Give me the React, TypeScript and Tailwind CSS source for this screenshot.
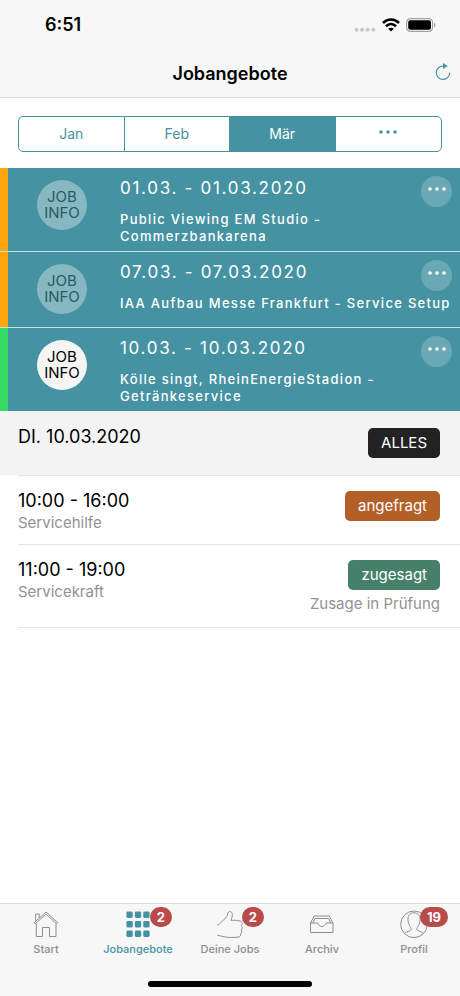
import React from "react";
import clsx from "clsx";

const months = ["Jan", "Feb", "Mär"];

const jobs = [
  { date: "01.03. - 01.03.2020", title: "Public Viewing EM Studio - Commerzbankarena", bar: "bg-[#ffa60d]", active: false },
  { date: "07.03. - 07.03.2020", title: "IAA Aufbau Messe Frankfurt - Service Setup", bar: "bg-[#ffa60d]", active: false },
  { date: "10.03. - 10.03.2020", title: "Kölle singt, RheinEnergieStadion - Getränkeservice", bar: "bg-[#33db64]", active: true },
];

const shifts = [
  { time: "10:00 - 16:00", role: "Servicehilfe", status: "angefragt", color: "bg-[#b26027]", note: "" },
  { time: "11:00 - 19:00", role: "Servicekraft", status: "zugesagt", color: "bg-[#46806a]", note: "Zusage in Prüfung" },
];

function Dots() {
  return (
    <svg viewBox="0 0 20 4" fill="currentColor" className="w-5" aria-hidden="true">
      <circle cx="3" cy="2" r="1.8" />
      <circle cx="10" cy="2" r="1.8" />
      <circle cx="17" cy="2" r="1.8" />
    </svg>
  );
}

function HomeIcon() {
  return (
    <svg width="28" height="28" viewBox="0 0 28 28" fill="none" stroke="currentColor" strokeWidth="1">
      <path d="M2.2 12.6 L14 2 L25.8 12.6 L24.8 13.8 L14 4.2 L3.2 13.8 Z" />
      <path d="M3.7 11 V4 H7.2 V8" />
      <path d="M4.3 13.500 V26.500 H10.500 V17.500 H17.500 V26.500 H24 V13.500" />
    </svg>
  );
}

function GridIcon() {
  return (
    <svg width="28" height="28" viewBox="0 0 28 28" fill="currentColor">
      {[1.6, 11, 20.6].map((y) =>
        [2.4, 10.8, 19.2].map((x) => <rect key={`${x}-${y}`} x={x} y={y} width="6.4" height="6.4" rx="1.4" />)
      )}
    </svg>
  );
}

function ThumbIcon() {
  return (
    <svg width="28" height="28" viewBox="0 0 28 28" fill="none" stroke="currentColor" strokeWidth="1" strokeLinejoin="round" strokeLinecap="round">
      <path d="M1.7 15 C5 14 7 9.500 10 7.700 C12.300 6 11 1.700 13.500 1.500 C17.500 1.500 16.500 6.500 15 10.300 C18 10.300 21 10.200 24 11 C26.500 11.700 26.800 14.500 25.300 15.500 C26.800 17 26.500 19 25.300 19.800 C26.300 21.500 25.500 23 24.600 23.800 C25 25.500 24 27 22 27.200 C17 27.600 13 27.500 10.700 27.200 C7 26.700 4.500 25.800 1.700 25.400" />
    </svg>
  );
}

function ArchiveIcon() {
  return (
    <svg width="28" height="28" viewBox="0 0 28 28" fill="none" stroke="currentColor" strokeWidth="1" strokeLinejoin="round">
      <path d="M2.500 13 V22.500 H25 V13 L21.300 6 H6.200 Z" />
      <path d="M2.500 13 H9.500 C10 15 12 16.500 13.800 16.500 C15.700 16.500 17.500 15 18 13 H25" />
      <path d="M5 12.800 L6.800 8.500 H20.700 L22.500 12.800" />
    </svg>
  );
}

function ProfileIcon() {
  return (
    <svg width="28" height="28" viewBox="0 0 28 28" fill="none" stroke="currentColor" strokeWidth="1">
      <circle cx="14" cy="14.300" r="13.300" />
      <path d="M4.500 23.500 C6 21.300 10.800 21.500 11.300 19.300 C11.300 17 8 15.500 8 9.300 C8 5 10.500 2.800 14 2.800 C17.500 2.800 20 5 20 9.300 C20 15.500 16.700 17 16.700 19.300 C17.200 21.500 22 21.300 23.500 23.500" />
    </svg>
  );
}

const tabs = [
  { label: "Start", icon: HomeIcon, badge: "" },
  { label: "Jobangebote", icon: GridIcon, badge: "2" },
  { label: "Deine Jobs", icon: ThumbIcon, badge: "2" },
  { label: "Archiv", icon: ArchiveIcon, badge: "" },
  { label: "Profil", icon: ProfileIcon, badge: "19" },
];

function StatusBar() {
  return (
    <div className="flex h-[50px] items-center justify-between pr-6 pl-[45px]">
      <span className="text-lg font-semibold">6:51</span>
      <div className="flex items-center gap-1.5">
        <svg width="22" height="16" viewBox="0 0 22 16" fill="#c9c9c9">
          <circle cx="2.500" cy="12.700" r="2" />
          <circle cx="8.100" cy="12.700" r="2" />
          <circle cx="13.700" cy="12.700" r="2" />
          <circle cx="19.300" cy="12.700" r="2" />
        </svg>
        <svg width="18" height="14" viewBox="0 0 18 14" fill="none" stroke="#000" strokeWidth="2.600">
          <path d="M1 5 C5.500 0.300 12.500 0.300 17 5" />
          <path d="M4 8.300 C7 5.400 11 5.400 14 8.300" />
          <path d="M9 13.500 L6.200 10.700 C7.800 9.300 10.200 9.300 11.800 10.700 Z" fill="#000" stroke="none" />
        </svg>
        <svg width="30" height="14" viewBox="0 0 30 14">
          <rect x="0.600" y="0.600" width="26" height="12.800" rx="4" fill="none" stroke="#a3a3a3" strokeWidth="1.200" />
          <rect x="2.200" y="2.200" width="22.800" height="9.600" rx="2.200" />
          <path d="M28 4.700 C29.800 5.400 29.800 8.600 28 9.300 Z" fill="#a3a3a3" />
        </svg>
      </div>
    </div>
  );
}

export default function App() {
  return (
    <div className="flex min-h-screen flex-col bg-white font-[Inter,sans-serif] text-black">
      <header className="border-b border-[#dcdcdc] bg-[#f7f7f7]">
        <StatusBar />
        <div className="grid h-[47px] grid-cols-[1fr_auto_1fr] items-center">
          <h1 className="col-start-2 text-lg font-semibold">Jobangebote</h1>
          <button type="button" aria-label="Aktualisieren" className="mr-2 justify-self-end pb-1 text-[#46979f]">
            <svg width="18" height="18" viewBox="0 0 18 18" fill="none" stroke="currentColor" strokeWidth="1.200">
              <path d="M9.500 3 A6.700 6.700 0 1 0 15.700 9.500" />
              <path d="M9 0 L13.800 3 L9 6 Z" fill="currentColor" stroke="none" />
            </svg>
          </button>
        </div>
      </header>

      <main className="flex-1">
        {/* Month switch */}
        <div className="px-[18px] pt-[18px] pb-4">
          <div className="grid h-9 grid-cols-4 divide-x divide-[#4593a2] overflow-hidden rounded-[5px] border border-[#4593a2] text-sm text-[#4593a2]">
            {months.map((month) => (
              <button key={month} type="button" className={clsx(month === "Mär" && "bg-[#4593a2] text-white")}>
                {month}
              </button>
            ))}
            <button type="button" aria-label="Weitere Monate" className="flex items-center justify-center pb-1">
              <Dots />
            </button>
          </div>
        </div>

        {/* Job list */}
        <ul className="divide-y divide-[#c3e4e8] bg-[#4593a2] text-white">
          {jobs.map((job) => (
            <li key={job.date} className="flex min-h-[76px]">
              <span className={clsx("w-2 shrink-0", job.bar)} />
              <div className="flex min-w-0 flex-1 items-start">
                <button
                  type="button"
                  className={clsx(
                    "mt-3 ml-[29px] size-[50px] shrink-0 rounded-full text-[15px] leading-4",
                    job.active ? "bg-[#f5f5f5] text-black" : "bg-[#86b8c2] text-[#2b5962]"
                  )}
                >
                  JOB
                  <br />
                  INFO
                </button>
                <div className="relative ml-[33px] min-w-0 flex-1 pt-2 pr-2 pb-1.5">
                  <h2 className="text-[17px] leading-6 tracking-widest">{job.date}</h2>
                  <p className="mt-[11px] text-[13px] leading-[17px] font-medium tracking-widest">{job.title}</p>
                  <button
                    type="button"
                    aria-label="Mehr"
                    className="absolute top-2 right-2 flex size-[31px] items-center justify-center rounded-full bg-[#6aa8b4] pb-1.5"
                  >
                    <Dots />
                  </button>
                </div>
              </div>
            </li>
          ))}
        </ul>

        {/* Selected day */}
        <div className="flex h-16 items-start justify-between bg-[#f3f3f3] pt-[17px] pr-5 pl-[18px]">
          <h2 className="text-lg leading-[18px]">DI. 10.03.2020</h2>
          <button type="button" className="h-[30px] rounded-[5px] bg-[#222222] px-[13px] text-[15px] text-white">
            ALLES
          </button>
        </div>
        <ul className="pl-[18px]">
          {shifts.map((shift) => (
            <li key={shift.time} className="flex items-start justify-between border-y border-[#e4e4e4] pt-[15px] pb-[9px] not-first:border-t-0">
              <div>
                <h3 className="text-lg leading-5">{shift.time}</h3>
                <p className="text-[15px] leading-6 text-[#929292]">{shift.role}</p>
              </div>
              <div className="flex flex-col items-end pr-5">
                <button type="button" className={clsx("h-[30px] rounded-[5px] px-[13px] text-[15px] text-white", shift.color)}>
                  {shift.status}
                </button>
                {shift.note && <p className="text-[15px] leading-7 text-[#929292]">{shift.note}</p>}
              </div>
            </li>
          ))}
        </ul>
      </main>

      <footer className="border-t border-[#dcdcdc] bg-[#f7f7f7]">
        <nav className="grid h-[77px] grid-cols-5">
          {tabs.map(({ label, icon: Icon, badge }) => (
            <a
              key={label}
              href="#"
              className={clsx("flex flex-col items-center pt-[6px]", label === "Jobangebote" ? "text-[#4593a2]" : "text-[#8e8e8e]")}
            >
              <span className="relative">
                <Icon />
                {badge && (
                  <span className="absolute -top-[3px] -right-5 rounded-full bg-[#b94b4b] px-[7px] text-[13px] leading-5 font-bold text-white">
                    {badge}
                  </span>
                )}
              </span>
              <span className="mt-[3px] text-[11px] leading-4 font-medium">{label}</span>
            </a>
          ))}
        </nav>
        <div className="flex justify-center pb-[9px]">
          <span className="h-[6px] w-[164px] rounded-full bg-black" />
        </div>
      </footer>
    </div>
  );
}
